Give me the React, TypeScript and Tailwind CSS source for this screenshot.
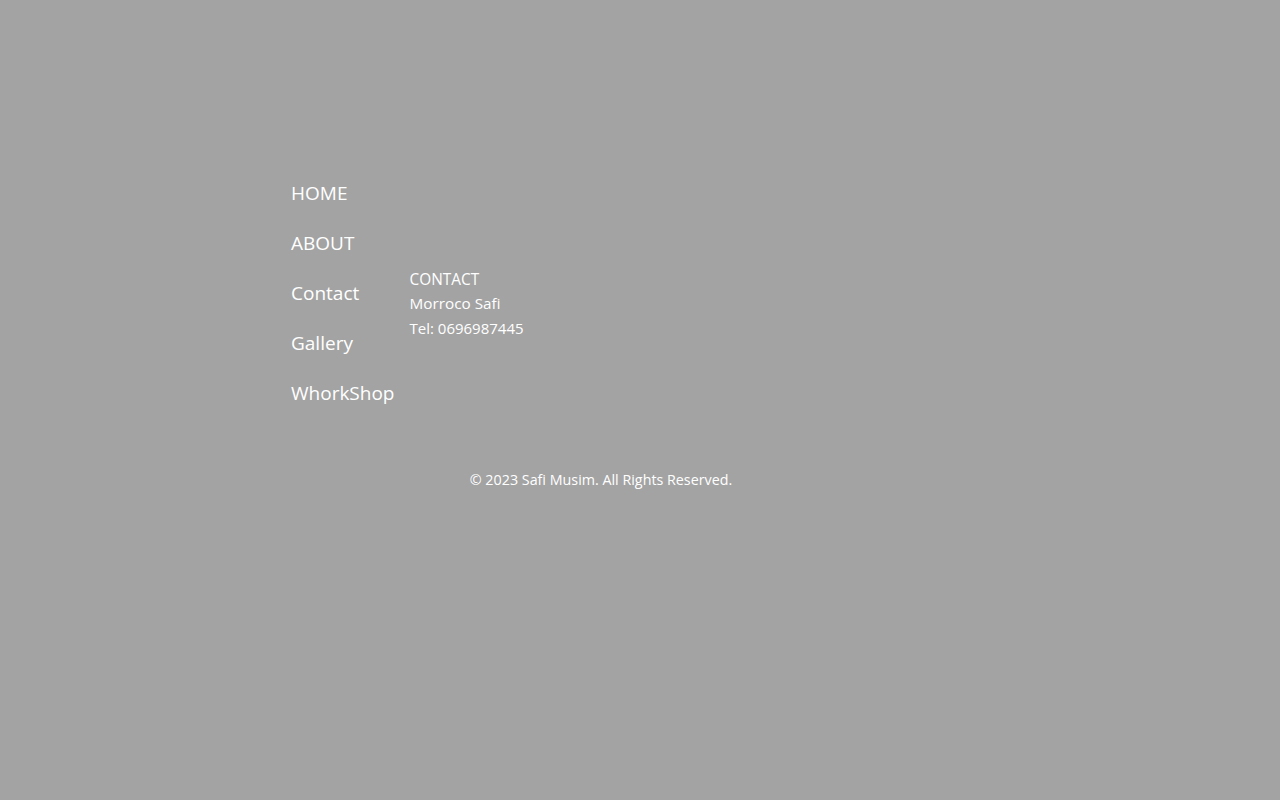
export default function App() {
  const links = ["HOME", "ABOUT", "Contact", "Gallery", "WhorkShop"];

  return (
    <div className="min-h-screen bg-[#a3a3a3] text-white font-['Open_Sans',sans-serif]">
      <footer className="pt-[168px] pl-[291px]">
        <div className="flex">
          <ul className="flex flex-col">
            {links.map((l) => (
              <li key={l} className="text-[19px] leading-[50px] h-[50px]">
                <a href="#">{l}</a>
              </li>
            ))}
          </ul>

          <div className="ml-[15px] mt-[99px] flex flex-col text-[15px] leading-[24.5px]">
            <span className="text-[15.4px] translate-y-[1px]">CONTACT</span>
            <span className="text-[15.3px] -translate-y-[1px]">Morroco Safi</span>
            <span>Tel: 0696987445</span>
          </div>
        </div>

        <p className="mt-[50px] w-[620px] text-center text-[14.3px] leading-[24px]">
          © 2023 Safi Musim. All Rights Reserved.
        </p>
      </footer>
    </div>
  );
}
